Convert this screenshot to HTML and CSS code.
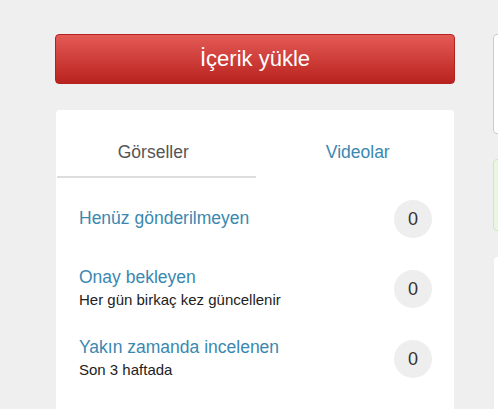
FILE: index.html
```html
<!DOCTYPE html>
<html lang="tr">
<head>
    <meta charset="UTF-8">
    <meta name="viewport" content="width=device-width, initial-scale=1.0">
    <title>İçerik yükle</title>
    <link rel="stylesheet" href="styles.css">
</head>
<body>

    <div class="page">
        <div class="main-column">
            <button type="button" class="upload-button">İçerik yükle</button>

            <div class="content-card">
                <div class="tabs">
                    <div class="tab active">Görseller</div>
                    <div class="tab">Videolar</div>
                </div>

                <ul class="status-list">
                    <li class="status-row">
                        <div class="status-text">
                            <a href="#" class="status-title">Henüz gönderilmeyen</a>
                        </div>
                        <span class="count-badge">0</span>
                    </li>
                    <li class="status-row">
                        <div class="status-text">
                            <a href="#" class="status-title">Onay bekleyen</a>
                            <div class="status-note">Her gün birkaç kez güncellenir</div>
                        </div>
                        <span class="count-badge">0</span>
                    </li>
                    <li class="status-row">
                        <div class="status-text">
                            <a href="#" class="status-title">Yakın zamanda incelenen</a>
                            <div class="status-note">Son 3 haftada</div>
                        </div>
                        <span class="count-badge">0</span>
                    </li>
                </ul>
            </div>
        </div>

        <div class="side-column">
            <div class="side-box"></div>
            <div class="side-box success"></div>
            <div class="side-box plain"></div>
        </div>
    </div>

</body>
</html>
```

FILE: styles.css
```css
html,
body {
    margin: 0;
    padding: 0;
    overflow: hidden;
}

body {
    font-family: "Liberation Sans", Arial, sans-serif;
    background-color: #efefef;
}

.page {
    display: flex;
    gap: 38px;
    padding: 34px 0 0 55px;
    height: 409px;
    box-sizing: border-box;
    overflow: hidden;
}

.main-column {
    width: 400px;
    flex-shrink: 0;
}

.upload-button {
    display: block;
    width: 100%;
    height: 50px;
    border: 1px solid #b3221e;
    border-radius: 4px;
    background: linear-gradient(to bottom, #e45a55, #b9231f);
    color: #ffffff;
    font-family: inherit;
    font-size: 22px;
    cursor: pointer;
}

.content-card {
    background-color: #ffffff;
    margin: 26px 1px 0;
    border-radius: 4px;
    padding-bottom: 20px;
}

.tabs {
    display: flex;
    padding-left: 1px;
}

.tab {
    flex: 1;
    text-align: center;
    font-size: 17.5px;
    line-height: 20px;
    padding: 32px 0 14px 6px;
    color: #3a88b0;
    border-bottom: 2px solid transparent;
}

.tab.active {
    padding: 32px 6px 14px 0;
    color: #555555;
    border-bottom-color: #dddddd;
}

.status-list {
    list-style: none;
    margin: 6px 0 0;
    padding: 0 22px 0 23px;
}

.status-row {
    display: flex;
    align-items: center;
    justify-content: space-between;
    height: 70px;
}

.status-text {
    padding-bottom: 2px;
}

.status-title {
    display: block;
    color: #3a88b0;
    text-decoration: none;
    font-size: 17.5px;
    line-height: 20px;
}

.status-note {
    margin-top: 4px;
    font-size: 15px;
    line-height: 18px;
    color: #222222;
}

.count-badge {
    display: flex;
    align-items: center;
    justify-content: center;
    width: 38px;
    height: 38px;
    border-radius: 50%;
    background-color: #eeeeee;
    color: #333333;
    font-size: 18px;
}

.side-column {
    width: 220px;
    flex-shrink: 0;
}

.side-box {
    height: 98px;
    background-color: #ffffff;
    border: 1px solid #cccccc;
    border-radius: 4px;
}

.side-box.success {
    height: 70px;
    margin-top: 25px;
    background-color: #eaf5e2;
    border-color: #d2e7c0;
}

.side-box.plain {
    height: 200px;
    margin-top: 25px;
    border-color: #eeeeee;
}
```
